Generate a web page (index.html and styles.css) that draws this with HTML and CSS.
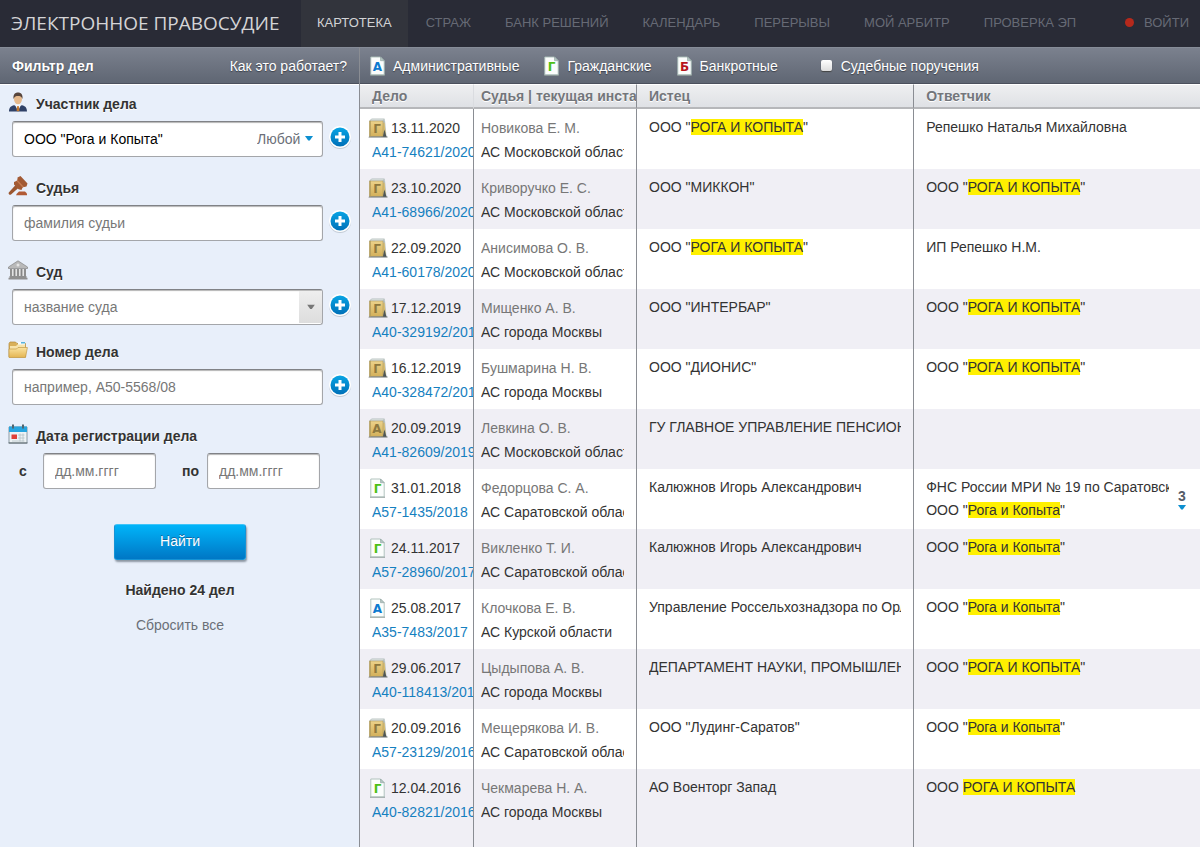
FILE: index.html
```html
<!DOCTYPE html>
<html lang="ru">
<head>
<meta charset="utf-8">
<title>Электронное правосудие</title>
<meta name="viewport" content="width=device-width, initial-scale=1">
<link rel="stylesheet" href="styles.css">
</head>
<body>
<svg class="sprite" aria-hidden="true">
  <defs>
    <linearGradient id="gold" x1="0" y1="0" x2="0" y2="1"><stop offset="0" stop-color="#ecd28a"/><stop offset="1" stop-color="#d2af5a"/></linearGradient>
    <linearGradient id="folder" x1="0" y1="0" x2="0" y2="1"><stop offset="0" stop-color="#fbe3a0"/><stop offset="1" stop-color="#e3b552"/></linearGradient>
    <linearGradient id="blue" x1="0" y1="0" x2="0" y2="1"><stop offset="0" stop-color="#08a4e4"/><stop offset="1" stop-color="#0070b8"/></linearGradient>
    <symbol id="book" viewBox="0 0 20 20">
      <path d="M14 3l3-1 1.500 17H13z" fill="#b9c2c0"/>
      <path d="M14 5l2.500-.5 1.500 14h-4z" fill="#d8bd70"/>
      <path d="M16.500 11.500l2 7.500h-4z" fill="#4e5657"/>
      <path d="M2 2.500l1.500-1.500h13L15 3H2z" fill="#eef1f0" stroke="#8fa09b" stroke-width=".6"/>
      <path d="M1.500 3h13.500v15.500H1.500z" fill="url(#gold)" stroke="#a1905c" stroke-width=".5"/>
      <path d="M1 18.500h18.500v1H.5z" fill="#6a7070"/>
      <path d="M1.500 3h1.300v15.500H1.500z" fill="#b39d5e"/>
    </symbol>
    <symbol id="sheet" viewBox="0 0 20 20">
      <path d="M2 18.500h15v1.200H2z" fill="#8b9492"/>
      <path d="M2.800 1h9.700l3.700 3.700v14.100H2.800z" fill="#fbfdfc" stroke="#a9bdb8" stroke-width=".9"/>
      <path d="M12.500 1v3.700h3.700z" fill="#b4c5c2" stroke="#8fa39f" stroke-width=".6"/>
    </symbol>
    <symbol id="book-g" viewBox="0 0 20 20"><use href="#book"/><text x="9" y="15" class="glyph glyph-book">Г</text></symbol>
    <symbol id="book-a" viewBox="0 0 20 20"><use href="#book"/><text x="9" y="15" class="glyph glyph-book">А</text></symbol>
    <symbol id="doc-g" viewBox="0 0 20 20"><use href="#sheet"/><text x="9.500" y="15" class="glyph glyph-green">Г</text></symbol>
    <symbol id="doc-a" viewBox="0 0 20 20"><use href="#sheet"/><text x="9.500" y="15" class="glyph glyph-blue">А</text></symbol>
    <symbol id="doc-b" viewBox="0 0 20 20"><use href="#sheet"/><text x="9.500" y="15" class="glyph glyph-red">Б</text></symbol>
    <symbol id="plus" viewBox="0 0 24 24">
      <circle cx="12" cy="13" r="11" fill="#a9b3bd" opacity=".6"/>
      <circle cx="12" cy="12" r="11" fill="#fff"/>
      <circle cx="12" cy="12" r="9.500" fill="url(#blue)"/>
      <path d="M12 7v10M7 12h10" stroke="#fff" stroke-width="3"/>
    </symbol>
    <symbol id="caret" viewBox="0 0 8 5"><path d="M0 0h8L4.800 4.500H3.200z" fill="currentColor"/></symbol>
  </defs>
</svg>

<header class="topbar">
  <h1 class="brand">ЭЛЕКТРОННОЕ ПРАВОСУДИЕ</h1>
  <nav class="menu">
    <a class="menu-item is-active" href="#">КАРТОТЕКА</a>
    <a class="menu-item" href="#">СТРАЖ</a>
    <a class="menu-item" href="#">БАНК РЕШЕНИЙ</a>
    <a class="menu-item" href="#">КАЛЕНДАРЬ</a>
    <a class="menu-item" href="#">ПЕРЕРЫВЫ</a>
    <a class="menu-item" href="#">МОЙ АРБИТР</a>
    <a class="menu-item" href="#">ПРОВЕРКА ЭП</a>
    <a class="menu-item login" href="#"><span class="dot"></span>ВОЙТИ</a>
  </nav>
</header>

<div class="layout">
  <aside class="sidebar">
    <div class="bar bar-side">
      <h2 class="bar-title">Фильтр дел</h2>
      <a class="bar-link" href="#">Как это работает?</a>
    </div>
    <form class="filters">
      <section class="field">
        <label class="field-label" for="party">
          <svg class="field-icon" viewBox="0 0 20 20"><path d="M1 19.500c0-4 2-5.800 5-6.300l4 1 4-1c3 .5 5 2.300 5 6.300z" fill="#2f4167"/><path d="M7 13l3 6 3-6-3-2z" fill="#f4f6fa"/><path d="M9.300 14h1.400l.8 4.500-1.500 1-1.500-1z" fill="#c4762b"/><ellipse cx="10" cy="7" rx="4" ry="5.300" fill="#e6b98c"/><path d="M5.500 7C5 2.500 7 .5 10 .5s5 2 4.500 6.500C13.500 4.500 12 4 10 4s-3.500.5-4.500 3z" fill="#57453c"/></svg>
          Участник дела
        </label>
        <div class="field-row">
          <div class="box">
            <input class="box-input is-filled" id="party" type="text" value='ООО "Рога и Копыта"'>
            <span class="kind"><select class="kind-select" aria-label="Роль участника"><option>Любой</option></select><svg class="kind-caret" viewBox="0 0 8 5"><use href="#caret"/></svg></span>
          </div>
          <button class="add" type="button" aria-label="Добавить участника"><svg viewBox="0 0 24 24"><use href="#plus"/></svg></button>
        </div>
      </section>
      <section class="field">
        <label class="field-label" for="judge">
          <svg class="field-icon" viewBox="0 0 20 20"><path d="M8.500 8l3 3-8.500 7.500c-1.500 1-3.200-.8-2-2.300z" fill="#9a5630"/><path d="M10 3l7 7-4 3-6-6.500z" fill="#c47a50"/><path d="M9.500 1.500L12.500 0 19.500 7.500l-1 3-2.500.5-6.500-7zM6 6l2.500-1 6 6.500-1 2.500-3-.8L6 8.500z" fill="#a25a34"/><path d="M9 17.500l2-2h6l2 2v1.700H8z" fill="#b15a34"/></svg>
          Судья
        </label>
        <div class="field-row">
          <div class="box"><input class="box-input" id="judge" type="text" placeholder="фамилия судьи"></div>
          <button class="add" type="button" aria-label="Добавить судью"><svg viewBox="0 0 24 24"><use href="#plus"/></svg></button>
        </div>
      </section>
      <section class="field field-tight">
        <label class="field-label" for="court">
          <svg class="field-icon" viewBox="0 0 20 20"><path d="M10 .8L19.500 7v1.500H.5V7z" fill="#b9b9b9" stroke="#858585" stroke-width=".7"/><path d="M2 9h16v7H2z" fill="#e3e3e3"/><path d="M3 9v7M6.500 9v7M10 9v7M13.500 9v7M17 9v7" stroke="#858585" stroke-width="1.800"/><path d="M1.500 16h17v1.700h1v1.800H.5v-1.800h1z" fill="#8f8f8f"/><circle cx="10" cy="5" r="1.500" fill="#e4e4e4"/></svg>
          Суд
        </label>
        <div class="field-row">
          <div class="box">
            <input class="box-input" id="court" type="text" placeholder="название суда">
            <button class="combo" type="button" aria-label="Список судов"><svg class="combo-caret" viewBox="0 0 8 5"><use href="#caret"/></svg></button>
          </div>
          <button class="add" type="button" aria-label="Добавить суд"><svg viewBox="0 0 24 24"><use href="#plus"/></svg></button>
        </div>
      </section>
      <section class="field">
        <label class="field-label" for="number">
          <svg class="field-icon" viewBox="0 0 20 20"><path d="M1 3.500L2 2h5.500L9 3.500h8.500V17H1z" fill="#d9b05a" stroke="#b38a3a" stroke-width=".7"/><path d="M10 2h7v4h-7z" fill="#f6fafc"/><path d="M13 2h4v1.500h-4z" fill="#58b4dc"/><path d="M2 6h6l1.500-1.500H17V9H2z" fill="#f7e3ab"/><path d="M1 17.500V9h7.500L10 7.500h9.400L17.500 17.500z" fill="url(#folder)" stroke="#c39b48" stroke-width=".7"/></svg>
          Номер дела
        </label>
        <div class="field-row">
          <div class="box"><input class="box-input" id="number" type="text" placeholder="например, А50-5568/08"></div>
          <button class="add" type="button" aria-label="Добавить номер"><svg viewBox="0 0 24 24"><use href="#plus"/></svg></button>
        </div>
      </section>
      <section class="field">
        <h3 class="field-label">
          <svg class="field-icon" viewBox="0 0 20 20"><path d="M1 3h18v16H1z" fill="#eef3f5" stroke="#758790" stroke-width=".8"/><path d="M1 2.500h18V8H1z" fill="#27a5df"/><path d="M5 .5v4M15 .5v4" stroke="#51656f" stroke-width="2"/><path d="M3.500 10.500H9V15H3.500z" fill="#e04138"/><path d="M10 11h6.500M10 14h6.500M4 17h12.500M12 9.500v8M15 9.500v8" stroke="#b4c1c7" stroke-width=".8"/><path d="M.5 18.500h19v1H.5z" fill="#5b666b"/></svg>
          Дата регистрации дела
        </h3>
        <div class="dates">
          <label class="date-label" for="from">с</label>
          <div class="box"><input class="box-input" id="from" type="text" placeholder="дд.мм.гггг"></div>
          <label class="date-label date-label-to" for="to">по</label>
          <div class="box"><input class="box-input" id="to" type="text" placeholder="дд.мм.гггг"></div>
        </div>
      </section>
      <div class="actions">
        <button class="submit" type="submit">Найти</button>
        <p class="found">Найдено 24 дел</p>
        <a class="reset" href="#">Сбросить все</a>
      </div>
    </form>
  </aside>

  <main class="results">
    <div class="bar bar-main">
      <a class="type" href="#"><svg class="type-icon" viewBox="0 0 20 20"><use href="#doc-a"/></svg>Административные</a>
      <a class="type" href="#"><svg class="type-icon" viewBox="0 0 20 20"><use href="#doc-g"/></svg>Гражданские</a>
      <a class="type" href="#"><svg class="type-icon" viewBox="0 0 20 20"><use href="#doc-b"/></svg>Банкротные</a>
      <label class="type type-check"><input class="check" type="checkbox">Судебные поручения</label>
    </div>
    <table class="cases">
      <colgroup><col class="col-case"><col class="col-judge"><col class="col-plaintiff"><col></colgroup>
      <thead>
        <tr><th>Дело</th><th>Судья | текущая инстанция</th><th>Истец</th><th>Ответчик</th></tr>
      </thead>
      <tbody>
        <tr>
          <td><div class="date"><svg class="case-icon" viewBox="0 0 20 20"><use href="#book-g"/></svg>13.11.2020</div><a class="case-link" href="#">А41-74621/2020</a></td>
          <td><div class="judge">Новикова Е. М.</div><div class="court">АС Московской области</div></td>
          <td><div class="party">ООО "<mark>РОГА И КОПЫТА</mark>"</div></td>
          <td><div class="party">Репешко Наталья Михайловна</div></td>
        </tr>
        <tr>
          <td><div class="date"><svg class="case-icon" viewBox="0 0 20 20"><use href="#book-g"/></svg>23.10.2020</div><a class="case-link" href="#">А41-68966/2020</a></td>
          <td><div class="judge">Криворучко Е. С.</div><div class="court">АС Московской области</div></td>
          <td><div class="party">ООО "МИККОН"</div></td>
          <td><div class="party">ООО "<mark>РОГА И КОПЫТА</mark>"</div></td>
        </tr>
        <tr>
          <td><div class="date"><svg class="case-icon" viewBox="0 0 20 20"><use href="#book-g"/></svg>22.09.2020</div><a class="case-link" href="#">А41-60178/2020</a></td>
          <td><div class="judge">Анисимова О. В.</div><div class="court">АС Московской области</div></td>
          <td><div class="party">ООО "<mark>РОГА И КОПЫТА</mark>"</div></td>
          <td><div class="party">ИП Репешко Н.М.</div></td>
        </tr>
        <tr>
          <td><div class="date"><svg class="case-icon" viewBox="0 0 20 20"><use href="#book-g"/></svg>17.12.2019</div><a class="case-link" href="#">А40-329192/2019</a></td>
          <td><div class="judge">Мищенко А. В.</div><div class="court">АС города Москвы</div></td>
          <td><div class="party">ООО "ИНТЕРБАР"</div></td>
          <td><div class="party">ООО "<mark>РОГА И КОПЫТА</mark>"</div></td>
        </tr>
        <tr>
          <td><div class="date"><svg class="case-icon" viewBox="0 0 20 20"><use href="#book-g"/></svg>16.12.2019</div><a class="case-link" href="#">А40-328472/2019</a></td>
          <td><div class="judge">Бушмарина Н. В.</div><div class="court">АС города Москвы</div></td>
          <td><div class="party">ООО "ДИОНИС"</div></td>
          <td><div class="party">ООО "<mark>РОГА И КОПЫТА</mark>"</div></td>
        </tr>
        <tr>
          <td><div class="date"><svg class="case-icon" viewBox="0 0 20 20"><use href="#book-a"/></svg>20.09.2019</div><a class="case-link" href="#">А41-82609/2019</a></td>
          <td><div class="judge">Левкина О. В.</div><div class="court">АС Московской области</div></td>
          <td><div class="party">ГУ ГЛАВНОЕ УПРАВЛЕНИЕ ПЕНСИОННОГО ФОНДА</div></td>
          <td></td>
        </tr>
        <tr>
          <td><div class="date"><svg class="case-icon" viewBox="0 0 20 20"><use href="#doc-g"/></svg>31.01.2018</div><a class="case-link" href="#">А57-1435/2018</a></td>
          <td><div class="judge">Федорцова С. А.</div><div class="court">АС Саратовской области</div></td>
          <td><div class="party">Калюжнов Игорь Александрович</div></td>
          <td>
            <div class="parties">
              <div class="party-list"><div class="party">ФНС России МРИ № 19 по Саратовской области</div><div class="party">ООО "<mark>Рога и Копыта</mark>"</div></div>
              <button class="more" type="button">3<svg class="more-caret" viewBox="0 0 8 5"><use href="#caret"/></svg></button>
            </div>
          </td>
        </tr>
        <tr>
          <td><div class="date"><svg class="case-icon" viewBox="0 0 20 20"><use href="#doc-g"/></svg>24.11.2017</div><a class="case-link" href="#">А57-28960/2017</a></td>
          <td><div class="judge">Викленко Т. И.</div><div class="court">АС Саратовской области</div></td>
          <td><div class="party">Калюжнов Игорь Александрович</div></td>
          <td><div class="party">ООО "<mark>Рога и Копыта</mark>"</div></td>
        </tr>
        <tr>
          <td><div class="date"><svg class="case-icon" viewBox="0 0 20 20"><use href="#doc-a"/></svg>25.08.2017</div><a class="case-link" href="#">А35-7483/2017</a></td>
          <td><div class="judge">Клочкова Е. В.</div><div class="court">АС Курской области</div></td>
          <td><div class="party">Управление Россельхознадзора по Орловской</div></td>
          <td><div class="party">ООО "<mark>Рога и Копыта</mark>"</div></td>
        </tr>
        <tr>
          <td><div class="date"><svg class="case-icon" viewBox="0 0 20 20"><use href="#book-g"/></svg>29.06.2017</div><a class="case-link" href="#">А40-118413/2016</a></td>
          <td><div class="judge">Цыдыпова А. В.</div><div class="court">АС города Москвы</div></td>
          <td><div class="party">ДЕПАРТАМЕНТ НАУКИ, ПРОМЫШЛЕННОЙ ПОЛИТИКИ</div></td>
          <td><div class="party">ООО "<mark>РОГА И КОПЫТА</mark>"</div></td>
        </tr>
        <tr>
          <td><div class="date"><svg class="case-icon" viewBox="0 0 20 20"><use href="#book-g"/></svg>20.09.2016</div><a class="case-link" href="#">А57-23129/2016</a></td>
          <td><div class="judge">Мещерякова И. В.</div><div class="court">АС Саратовской области</div></td>
          <td><div class="party">ООО "Лудинг-Саратов"</div></td>
          <td><div class="party">ООО "<mark>Рога и Копыта</mark>"</div></td>
        </tr>
        <tr>
          <td><div class="date"><svg class="case-icon" viewBox="0 0 20 20"><use href="#doc-g"/></svg>12.04.2016</div><a class="case-link" href="#">А40-82821/2016</a></td>
          <td><div class="judge">Чекмарева Н. А.</div><div class="court">АС города Москвы</div></td>
          <td><div class="party">АО Военторг Запад</div></td>
          <td><div class="party">ООО <mark>РОГА И КОПЫТА</mark></div></td>
        </tr>
      </tbody>
    </table>
  </main>
</div>
</body>
</html>
```

FILE: styles.css
```css
* { box-sizing: border-box; }

body {
  margin: 0;
  min-height: 100vh;
  display: flex;
  flex-direction: column;
  font-family: "Liberation Sans", Arial, sans-serif;
  font-size: 14px;
  color: #333;
  background: #fff;
}

a { color: inherit; text-decoration: none; }
h1, h2, h3, p { margin: 0; }
button, input, select { font: inherit; }
button { border: 0; padding: 0; background: none; cursor: pointer; }

.sprite { position: absolute; width: 0; height: 0; }
.glyph { font-family: "DejaVu Sans", sans-serif; font-weight: bold; font-size: 12px; text-anchor: middle; text-shadow: none; }
.glyph-book { fill: #8d783f; }
.glyph-green { fill: #4dc016; }
.glyph-blue { fill: #0d7ad0; }
.glyph-red { fill: #b8141c; }

/* Top bar */
.topbar { display: flex; height: 47px; background: #292b36; }
.brand {
  flex: none;
  width: 301px;
  padding-left: 11px;
  font-family: "Open Sans", "Noto Sans", sans-serif;
  font-size: 19px;
  font-weight: 400;
  line-height: 47px;
  color: #d4d4d6;
  white-space: nowrap;
}
.menu { flex: 1; display: flex; gap: 2px; }
.menu-item { padding: 0 16px; line-height: 45px; font-size: 13px; color: #666a75; white-space: nowrap; }
.menu-item.is-active { background: #32343c; color: #d2d3d6; }
.login { display: flex; align-items: center; gap: 10px; margin-left: auto; padding-bottom: 2px; padding-right: 11px; }
.dot { width: 9px; height: 9px; border-radius: 50%; background: #b5291c; }

/* Grey bars */
.layout { flex: 1; display: flex; }
.bar {
  display: flex;
  align-items: center;
  height: 37px;
  border-top: 1px solid #868c98;
  border-bottom: 1px solid #4b505d;
  background: linear-gradient(#7b818e, #5f6673);
  color: #fff;
  text-shadow: 0 1px 1px #3a3f4a;
}
.bar-side { justify-content: space-between; padding: 0 12px; }
.bar-title { font-size: 14px; }
.bar-main { padding-left: 8px; }

/* Sidebar */
.sidebar { flex: none; width: 360px; background: #e8effa; border-right: 1px solid #8a8d93; }
.filters { padding: 6px 7px 6px 8px; border-top: 1px solid #fff; }
.field { margin-bottom: 18px; }
.field-tight { margin-bottom: 14px; }
.field-label {
  display: flex;
  align-items: center;
  gap: 8px;
  height: 26px;
  margin-bottom: 4px;
  font-size: 14px;
  font-weight: bold;
  text-shadow: 0 1px 0 #fff;
}
.field-icon { width: 20px; height: 20px; margin-bottom: 4px; }
.field-row { display: flex; align-items: center; gap: 5px; padding-left: 4px; }
.box {
  flex: 1;
  display: flex;
  align-items: center;
  height: 36px;
  border: 1px solid #a4a6aa;
  border-top-color: #808286;
  border-radius: 3px;
  background: #fff;
  box-shadow: inset 0 1px 1px #b5b5b5;
}
.box-input { flex: 1; min-width: 0; height: 32px; border: 0; outline: 0; padding: 0 11px; background: transparent; color: #777; }
.box-input::placeholder { color: #777; opacity: 1; }
.box-input.is-filled { color: #000; }
.kind { display: flex; align-items: center; gap: 4px; padding-right: 9px; color: #0c8fd0; }
.kind-select { appearance: none; border: 0; padding: 0; background: none; color: #6b6f78; }
.kind-caret { width: 8px; height: 5px; margin-bottom: 2px; }
.combo { display: flex; align-items: center; justify-content: center; width: 23px; height: 32px; background: linear-gradient(#eee, #ddd); color: #777; }
.combo-caret { width: 8px; height: 6px; }
.add { width: 24px; height: 24px; margin-bottom: 4px; }
.add svg { display: block; }
.dates { display: grid; grid-template-columns: 31px 113px 51px 113px; align-items: center; padding-left: 4px; }
.date-label { font-weight: bold; padding-left: 7px; }
.date-label-to { padding-left: 26px; }
.actions { display: flex; flex-direction: column; align-items: center; padding-top: 17px; }
.submit {
  width: 132px;
  height: 36px;
  padding-bottom: 3px;
  border: 1px solid #1593d6;
  border-top-color: #3fc4f8;
  border-radius: 3px;
  background: linear-gradient(#00b4f9, #0077c5);
  box-shadow: 1px 2px 2px #8c96a2;
  color: #fff;
  text-shadow: 0 -1px 0 #1569a0;
}
.found { margin-top: 20px; line-height: 20px; font-weight: bold; text-shadow: 0 1px 0 #fff; }
.reset { margin-top: 15px; line-height: 20px; color: #6b6f78; }

/* Case types */
.results { flex: 1; min-width: 0; background: #f0eff5; }
.type { display: flex; align-items: center; gap: 5px; margin-right: 23px; white-space: nowrap; }
.type-icon { width: 20px; height: 20px; }
.type-check { gap: 9px; margin-left: 20px; }
.check { appearance: none; width: 11px; height: 11px; margin: 0; border-radius: 2px; background: linear-gradient(#fff, #ddd); box-shadow: 0 1px 1px #444; }

/* Case table */
.cases { width: 100%; table-layout: fixed; border-collapse: separate; border-spacing: 0; }
.col-case { width: 114px; }
.col-judge { width: 163px; }
.col-plaintiff { width: 33%; }
.cases th {
  height: 25px;
  padding: 0 0 0 12px;
  overflow: hidden;
  border-top: 1px solid #fff;
  border-bottom: 2px solid #b6b7ba;
  background: linear-gradient(#eeeff1, #dfe1e5);
  line-height: 20px;
  text-align: left;
  color: #73767b;
  text-shadow: 0 1px 0 #fff;
  white-space: nowrap;
  border-right: 1px solid #8a8d93;
}
.cases th:first-child { border-right-color: #dadce0; }
.cases td { height: 60px; padding: 7px 12px 0; overflow: hidden; vertical-align: top; background: #fff; border-right: 1px solid #8a8d93; }
.cases tr:nth-child(even) td { background: #f0eff5; }
.cases tr:last-child td { height: 78px; }
.cases td:first-child { padding-right: 0; }
.cases th:nth-child(2), .cases td:nth-child(2) { padding-left: 7px; }
.cases th:last-child, .cases td:last-child { border-right: 0; }
.date, .judge, .court, .case-link { display: block; line-height: 24px; white-space: nowrap; overflow: hidden; }
.date { display: flex; align-items: center; gap: 3px; margin-left: -4px; }
.case-icon { flex: none; width: 20px; height: 20px; }
.case-link { color: #1580c0; }
.judge { color: #777; }
.party { line-height: 23px; white-space: nowrap; overflow: hidden; }
.parties { display: flex; align-items: center; gap: 9px; margin-right: 2px; }
.party-list { flex: 1; min-width: 0; }
.more { display: flex; flex-direction: column; align-items: center; gap: 1px; font-weight: bold; line-height: 16px; color: #555b66; }
.more-caret { width: 8px; height: 5px; color: #0c8fd0; }
mark { background: #fff000; color: inherit; }
```
